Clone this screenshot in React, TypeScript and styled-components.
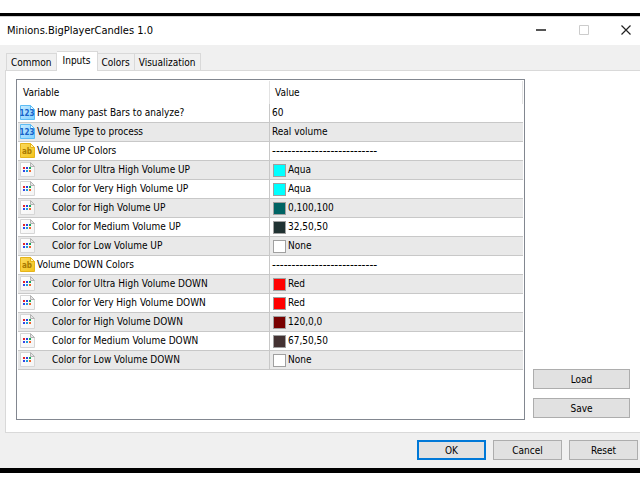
import React, { useState } from "react";
import styled, { createGlobalStyle, css } from "styled-components";

const GlobalStyle = createGlobalStyle`
  * { box-sizing: border-box; }
  html, body { margin: 0; padding: 0; background: #fff; }
  body, button {
    font-family: "DejaVu Sans Condensed", "DejaVu Sans", sans-serif;
    font-size: 10px;
    color: #000;
  }
`;

const Screen = styled.div`
  padding: 13px 0 7px;
`;

const Dialog = styled.main`
  border-top: 3px solid #000;
  border-bottom: 5px solid #000;
  background: #f0f0f0;
`;

const TitleBar = styled.header`
  display: flex;
  align-items: flex-start;
  justify-content: space-between;
  height: 29px;
  padding-left: 7px;
  border-top: 1px solid #d0d0d0;
  background: #fff;
`;

const Title = styled.h1`
  margin: 0;
  font-size: 11px;
  font-weight: 400;
  line-height: 28px;
`;

const WindowControls = styled.div`
  display: flex;
`;

const WindowButton = styled.button`
  display: flex;
  align-items: center;
  justify-content: center;
  width: 43px;
  height: 26px;
  padding: 0;
  border: 0;
  background: transparent;

  &:last-child {
    width: 28px;
    margin-left: 7px;
  }
`;

const TabList = styled.div`
  display: flex;
  align-items: flex-end;
  height: 25px;
  padding-left: 6px;
`;

const Tab = styled.button<{ $active: boolean }>`
  height: 17px;
  padding: 0 4px;
  border: 1px solid #d9d9d9;
  border-bottom: 0;
  border-left-width: 0;
  background: #f0f0f0;
  white-space: nowrap;

  &:first-child {
    border-left-width: 1px;
  }

  ${({ $active }) =>
    $active &&
    css`
      position: relative;
      height: 20px;
      margin-bottom: -1px;
      padding: 0 6px 2px;
      background: #fff;
    `}
`;

const Panel = styled.section`
  display: flex;
  gap: 8px;
  margin-left: 5px;
  padding: 8px 10px 12px;
  border: 1px solid #d9d9d9;
  border-right: 0;
  background: #fff;
`;

const ListBox = styled.div`
  flex: 1;
  min-width: 0;
  min-height: 341px;
  padding: 1px;
  border: 1px solid #828790;
  background: #fff;
`;

const Table = styled.table`
  width: 100%;
  border-collapse: separate;
  border-spacing: 0;
  table-layout: fixed;
  line-height: 14px;
  text-align: left;
`;

const HeaderCell = styled.th<{ $name?: boolean }>`
  width: ${({ $name }) => ($name ? "252px" : "auto")};
  height: 23px;
  padding: 0 5px;
  border-right: 1px solid #e3e3e3;
  font-weight: 400;
`;

const Row = styled.tr`
  &:nth-child(even) {
    background: #e9e9e9;
  }
`;

const Cell = styled.td`
  height: 19px;
  padding: 0 2px;
  border-bottom: 1px solid #c8c8c8;
  white-space: nowrap;

  &:first-child {
    border-right: 1px solid #c8c8c8;
  }
`;

const CellContent = styled.div`
  display: flex;
  align-items: center;
  gap: 2px;
  height: 18px;
`;

const Swatch = styled.span<{ $color: string }>`
  width: 13px;
  height: 13px;
  margin-left: 1px;
  border: 1px solid #a0a0a0;
  background: ${({ $color }) => $color};
`;

const SeparatorText = styled.span`
  font-size: 12px;
`;

const SideButtons = styled.div`
  display: flex;
  flex-direction: column;
  justify-content: flex-end;
  gap: 9px;
  width: 97px;
  padding-bottom: 2px;
`;

const Footer = styled.footer`
  display: flex;
  justify-content: flex-end;
  gap: 7px;
  padding: 7px 2px 8px;
`;

const PushButton = styled.button<{ $primary?: boolean }>`
  min-width: 69px;
  height: 20px;
  padding: 0 4px;
  border: ${({ $primary }) => ($primary ? "2px solid #0078d7" : "1px solid #adadad")};
  background: #e1e1e1;
`;

const IconSvg = styled.svg`
  flex: none;
  display: block;
`;

type Kind = "number" | "text" | "color";

const pageLooks = {
  number: { from: "#c9ebff", to: "#7fd0ff", edge: "#5cbcf5", fold: "#e4f7ff" },
  text: { from: "#fbd95c", to: "#f4c41c", edge: "#e6b41a", fold: "#fff1ad" },
  color: { from: "#ffffff", to: "#f4f4f4", edge: "#d6d6d6", fold: "#e6e6e6" },
};

function PageIcon({ kind }: { kind: Kind }) {
  const look = pageLooks[kind];
  const gradient = `page-${kind}`;
  return (
    <IconSvg width="15" height="16" viewBox="0 0 15 16" aria-hidden="true">
      <defs>
        <linearGradient id={gradient} x1="0" y1="0" x2="1" y2="1">
          <stop offset="0" stopColor={look.from} />
          <stop offset="1" stopColor={look.to} />
        </linearGradient>
      </defs>
      <path d="M.5 .5H10.5L14.5 4.5V14.5H.5Z" fill={`url(#${gradient})`} stroke={look.edge} />
      <path d="M10.5 .5V4.5H14.5Z" fill={look.fold} stroke={kind === "color" ? "#b4b4b4" : look.edge} />
      {kind === "number" && (
        <text x="7" y="11" textAnchor="middle" fontFamily="DejaVu Sans Condensed" fontWeight="700" fontSize="8" fill="#1763c9">
          123
        </text>
      )}
      {kind === "text" && (
        <text x="7" y="11" textAnchor="middle" fontFamily="DejaVu Sans Condensed" fontWeight="700" fontSize="8" fill="#a87900">
          ab
        </text>
      )}
      {kind === "color" && (
        <g>
          <path d="M3 5h2v2H3z" fill="#e5242a" />
          <path d="M6 5h2v2H6z" fill="#2a3fe0" />
          <path d="M9 5h2v2H9z" fill="#18a558" />
          <path d="M3 8h2v2H3z" fill="#3546e8" />
          <path d="M6 8h2v2H6z" fill="#1c9fd8" />
          <path d="M9 8h2v2H9z" fill="#f0642a" />
        </g>
      )}
    </IconSvg>
  );
}

const NameText = styled.span<{ $indent: boolean }>`
  padding-left: ${({ $indent }) => ($indent ? 15 : 0)}px;
`;

interface Variable {
  kind: Kind;
  name: string;
  value: string;
  color?: string;
}

const DASHES = "---------------------------";

const variables: Variable[] = [
  { kind: "number", name: "How many past Bars to analyze?", value: "60" },
  { kind: "number", name: "Volume Type to process", value: "Real volume" },
  { kind: "text", name: "Volume UP Colors", value: DASHES },
  { kind: "color", name: "Color for Ultra High Volume UP", value: "Aqua", color: "#00ffff" },
  { kind: "color", name: "Color for Very High Volume UP", value: "Aqua", color: "#00ffff" },
  { kind: "color", name: "Color for High Volume UP", value: "0,100,100", color: "#006464" },
  { kind: "color", name: "Color for Medium Volume UP", value: "32,50,50", color: "#203232" },
  { kind: "color", name: "Color for Low Volume UP", value: "None", color: "#ffffff" },
  { kind: "text", name: "Volume DOWN Colors", value: DASHES },
  { kind: "color", name: "Color for Ultra High Volume DOWN", value: "Red", color: "#ff0000" },
  { kind: "color", name: "Color for Very High Volume DOWN", value: "Red", color: "#ff0000" },
  { kind: "color", name: "Color for High Volume DOWN", value: "120,0,0", color: "#780000" },
  { kind: "color", name: "Color for Medium Volume DOWN", value: "67,50,50", color: "#433232" },
  { kind: "color", name: "Color for Low Volume DOWN", value: "None", color: "#ffffff" },
];

const tabs = ["Common", "Inputs", "Colors", "Visualization"];

export default function App() {
  const [active, setActive] = useState("Inputs");
  return (
    <Screen>
      <GlobalStyle />
      <Dialog>
        <TitleBar>
          <Title>Minions.BigPlayerCandles 1.0</Title>
          <WindowControls>
            <WindowButton aria-label="Minimize">
              <IconSvg width="10" height="10" viewBox="0 0 10 10">
                <path d="M0 5H10" stroke="#555" strokeWidth="2" />
              </IconSvg>
            </WindowButton>
            <WindowButton aria-label="Maximize" disabled>
              <IconSvg width="10" height="10" viewBox="0 0 10 10">
                <path d="M.5 .5H9.5V9.5H.5Z" fill="none" stroke="#ccc" />
              </IconSvg>
            </WindowButton>
            <WindowButton aria-label="Close">
              <IconSvg width="10" height="10" viewBox="0 0 10 10">
                <path d="M.5 .5L9.5 9.5M9.5 .5L.5 9.5" stroke="#222" strokeWidth="1.2" />
              </IconSvg>
            </WindowButton>
          </WindowControls>
        </TitleBar>
        <TabList role="tablist">
          {tabs.map((tab) => (
            <Tab key={tab} role="tab" aria-selected={tab === active} $active={tab === active} onClick={() => setActive(tab)}>
              {tab}
            </Tab>
          ))}
        </TabList>
        <Panel role="tabpanel" aria-label={active}>
          <ListBox>
            <Table>
              <thead>
                <tr>
                  <HeaderCell $name>Variable</HeaderCell>
                  <HeaderCell>Value</HeaderCell>
                </tr>
              </thead>
              <tbody>
                {variables.map((item) => (
                  <Row key={item.name}>
                    <Cell>
                      <CellContent>
                        <PageIcon kind={item.kind} />
                        <NameText $indent={item.kind === "color"}>{item.name}</NameText>
                      </CellContent>
                    </Cell>
                    <Cell>
                      <CellContent>
                        {item.color && <Swatch $color={item.color} />}
                        {item.kind === "text" ? <SeparatorText>{item.value}</SeparatorText> : item.value}
                      </CellContent>
                    </Cell>
                  </Row>
                ))}
              </tbody>
            </Table>
          </ListBox>
          <SideButtons>
            <PushButton>Load</PushButton>
            <PushButton>Save</PushButton>
          </SideButtons>
        </Panel>
        <Footer>
          <PushButton $primary>OK</PushButton>
          <PushButton>Cancel</PushButton>
          <PushButton>Reset</PushButton>
        </Footer>
      </Dialog>
    </Screen>
  );
}
